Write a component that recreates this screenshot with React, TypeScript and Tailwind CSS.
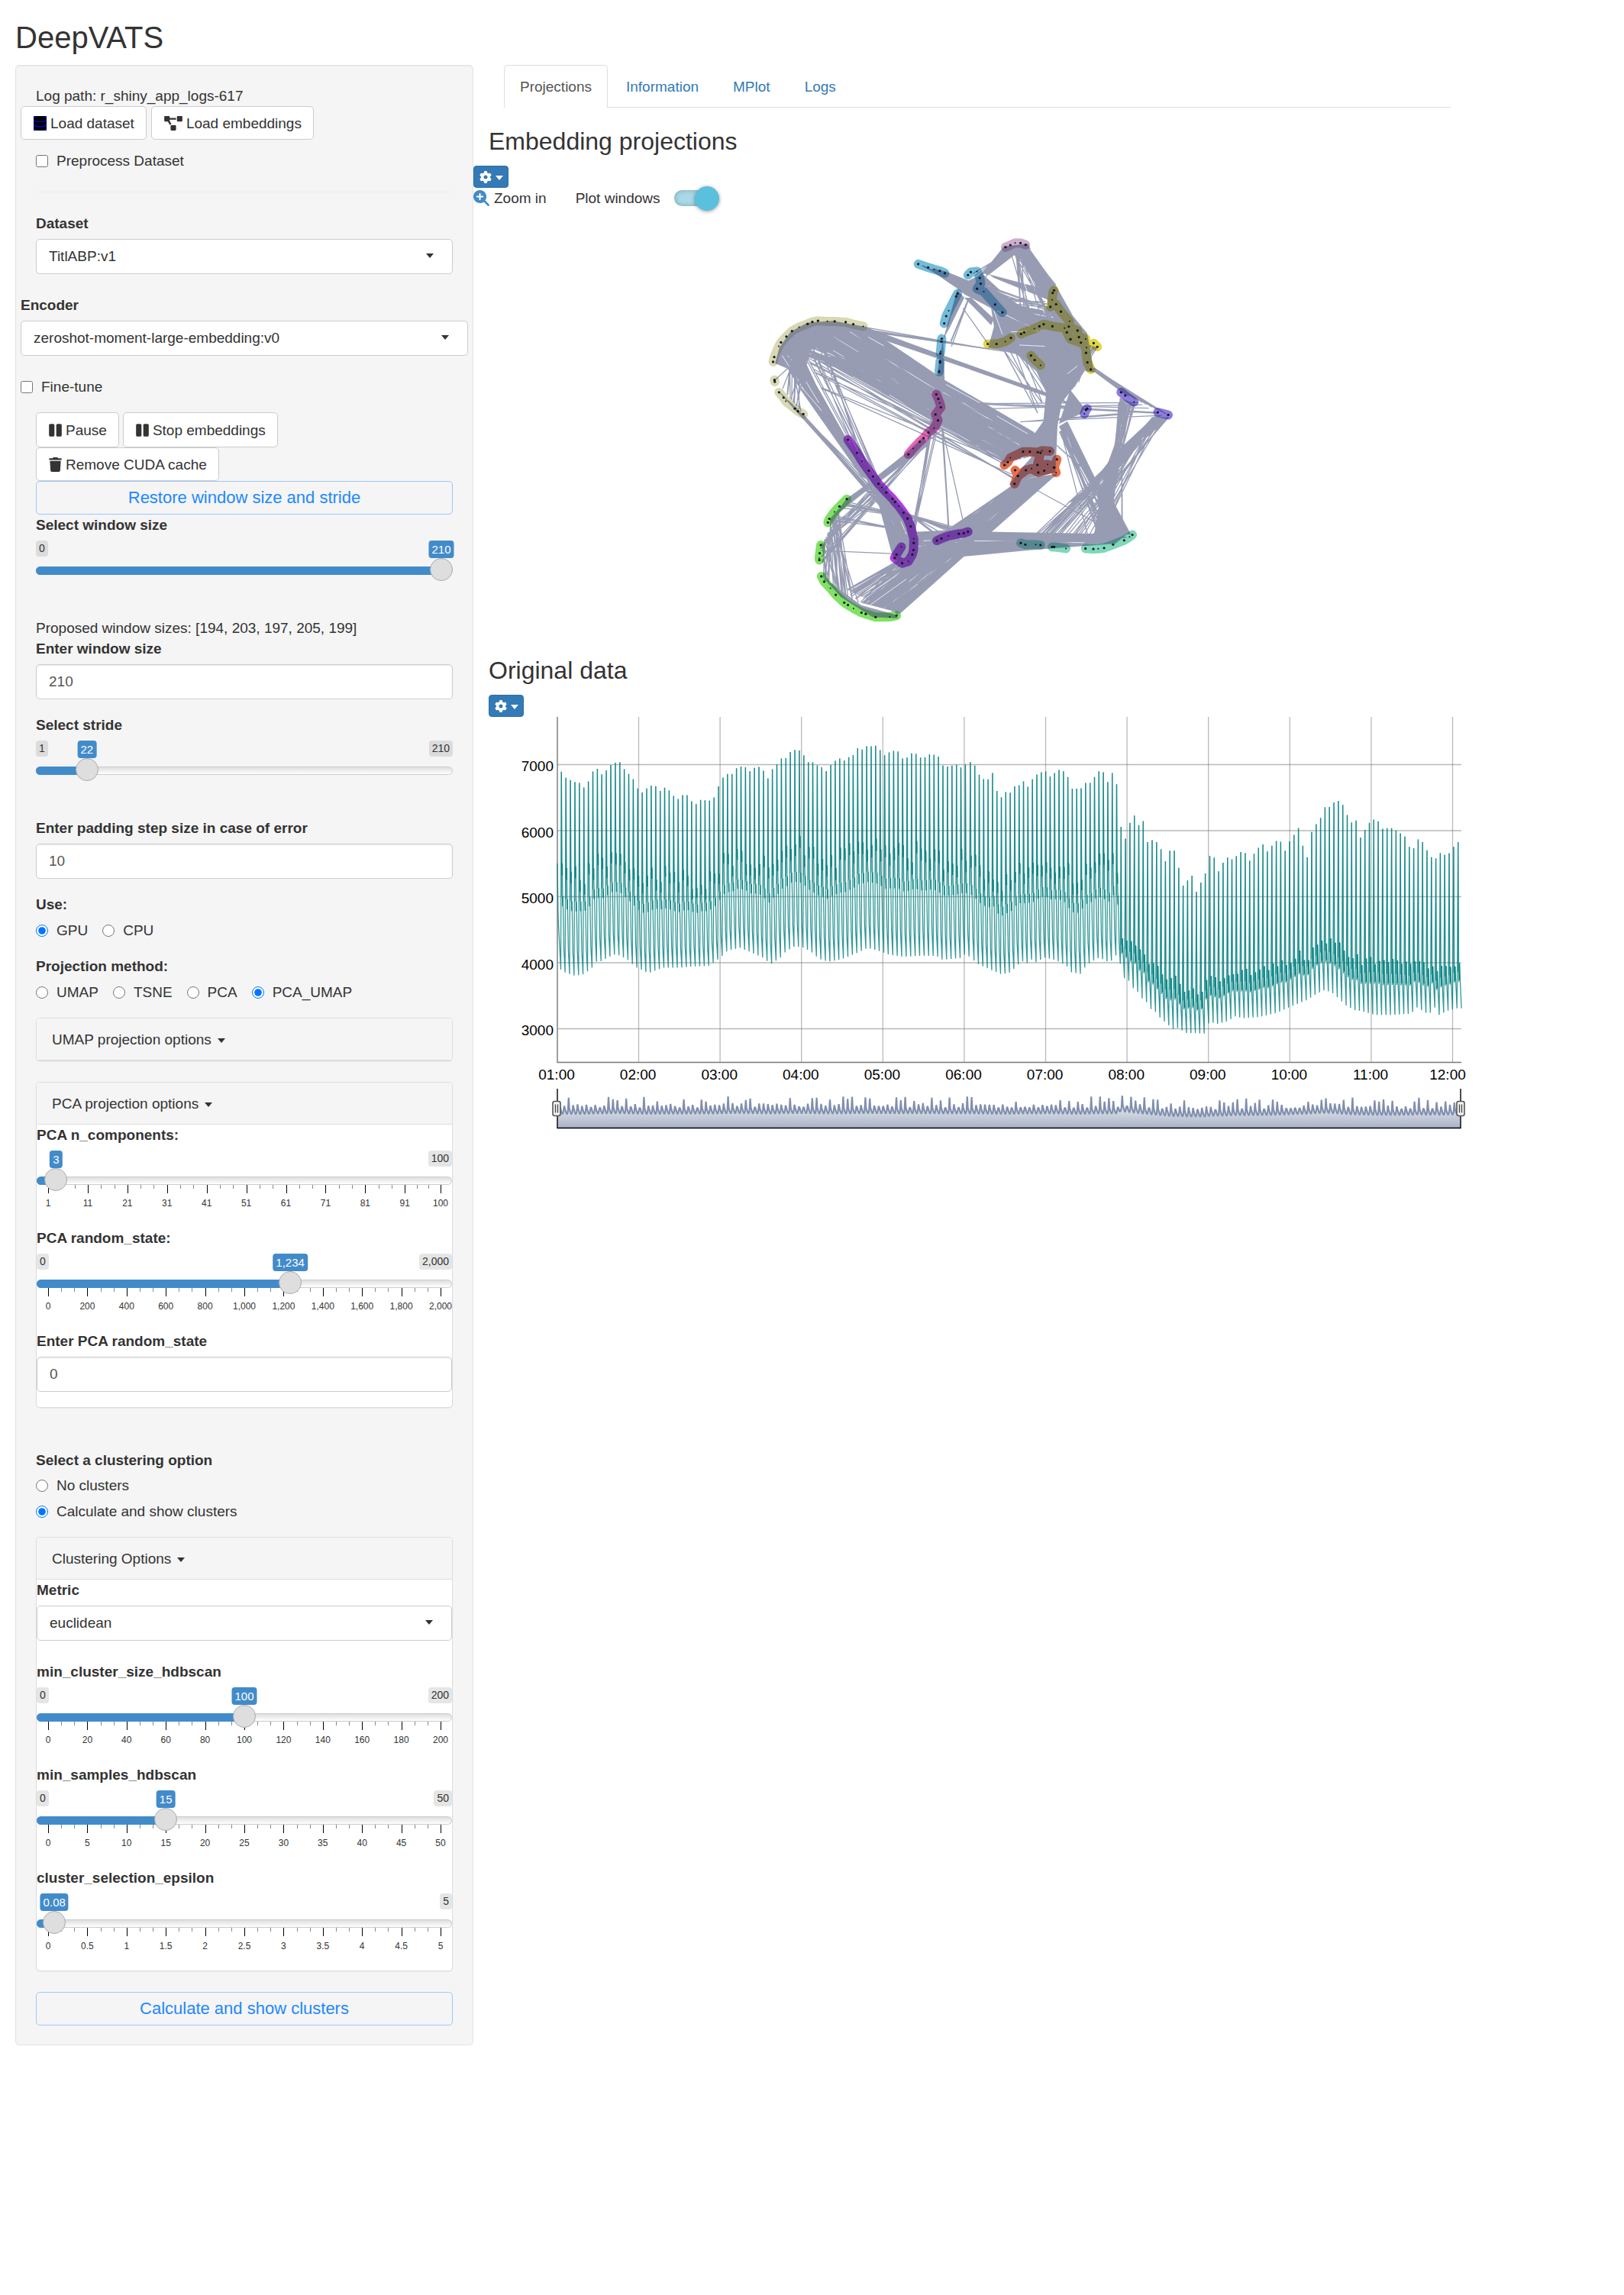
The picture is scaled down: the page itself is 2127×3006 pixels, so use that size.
import React from "react";
import { FaDatabase, FaPause, FaProjectDiagram } from "react-icons/fa";
import { FaGear, FaMagnifyingGlassPlus, FaTrash } from "react-icons/fa6";

type Point = [number, number];

/* ---------- form pieces ---------- */

function Caret({ className = "" }: { className?: string }) {
  return (
    <span
      aria-hidden="true"
      className={`inline-block border-x-[5px] border-t-[6px] border-x-transparent border-t-current ${className}`}
    />
  );
}

function SelectBox({ id, label, options }: { id: string; label: string; options: string[] }) {
  return (
    <div>
      <label htmlFor={id} className="mb-[7px] block font-bold">
        {label}
      </label>
      <div className="relative">
        <select
          id={id}
          className="block h-[46px] w-full appearance-none rounded-[5px] border border-[#ccc] bg-white px-4 pb-px text-[#333]"
        >
          {options.map((o) => (
            <option key={o}>{o}</option>
          ))}
        </select>
        <Caret className="pointer-events-none absolute top-[19px] right-[25px]" />
      </div>
    </div>
  );
}

function NumberBox({ id, label, value }: { id: string; label: string; value: string }) {
  return (
    <div>
      <label htmlFor={id} className="mb-[7px] block font-bold">
        {label}
      </label>
      <input
        id={id}
        type="text"
        inputMode="numeric"
        defaultValue={value}
        className="block h-[46px] w-full rounded-[5px] border border-[#ccc] bg-white px-4 pb-px text-[#555] shadow-[inset_0_1px_2px_rgba(0,0,0,0.08)]"
      />
    </div>
  );
}

function Choice({
  type,
  name,
  label,
  checked = false,
}: {
  type: "radio" | "checkbox";
  name: string;
  label: string;
  checked?: boolean;
}) {
  return (
    <label className="flex items-center gap-[11px]">
      <input type={type} name={name} defaultChecked={checked} className="size-4 shrink-0 accent-[#0075ff]" />
      {label}
    </label>
  );
}

interface SliderProps {
  id: string;
  label: string;
  min: number;
  max: number;
  value: number;
  ticks?: number[];
}

const fmt = (n: number) => n.toLocaleString("en-US");

function Slider({ id, label, min, max, value, ticks }: SliderProps) {
  const frac = (v: number) => ((v - min) / (max - min)) * 100;
  const minors = ticks
    ? ticks.slice(0, -1).flatMap((t, i) => {
        const step = (ticks[i + 1] - t) / 3;
        return [t + step, t + 2 * step];
      })
    : [];
  const showMin = frac(value) > 5;
  const showMax = frac(value) < 95;
  return (
    <div>
      <label htmlFor={id} className="mb-[7px] block font-bold">
        {label}
      </label>
      <div className={ticks ? "relative h-[81px]" : "relative h-[54px]"}>
        <div className="flex h-[21px] justify-between text-[14px] leading-[20px]">
          <span className={showMin ? "rounded bg-black/10 px-1" : "invisible"}>{fmt(min)}</span>
          <span className={showMax ? "rounded bg-black/10 px-1" : "invisible"}>{fmt(max)}</span>
        </div>
        <div className="absolute inset-x-0 top-[34px] h-[11px] rounded-[6px] border border-[#ccc] bg-linear-to-b from-[#dedede] to-white" />
        <div className="absolute inset-x-[15px] top-0 h-[45px]">
          <div
            className="absolute top-[34px] -left-[15px] h-[11px] rounded-l-[6px] bg-[#428bca]"
            style={{ width: `calc(${frac(value)}% + 15px)` }}
          />
          <span
            className="absolute top-0 -translate-x-1/2 rounded bg-[#428bca] px-1 text-[15px] leading-[23px] text-white"
            style={{ left: `${frac(value)}%` }}
          >
            {fmt(value)}
          </span>
          {ticks && (
            <>
              {minors.map((t) => (
                <span key={t} className="absolute top-[45px] h-[5px] w-px bg-[#888]" style={{ left: `${frac(t)}%` }} />
              ))}
              {ticks.map((t) => (
                <React.Fragment key={t}>
                  <span className="absolute top-[45px] h-[11px] w-px bg-black" style={{ left: `${frac(t)}%` }} />
                  <span
                    className="absolute top-[61px] -translate-x-1/2 text-[12px] leading-[16px]"
                    style={{ left: `${frac(t)}%` }}
                  >
                    {fmt(t)}
                  </span>
                </React.Fragment>
              ))}
            </>
          )}
        </div>
        <input
          id={id}
          type="range"
          min={min}
          max={max}
          step="any"
          defaultValue={value}
          className="absolute inset-x-0 top-[23px] h-[30px] w-full appearance-none bg-transparent [&::-webkit-slider-thumb]:size-[30px] [&::-webkit-slider-thumb]:appearance-none [&::-webkit-slider-thumb]:rounded-full [&::-webkit-slider-thumb]:border [&::-webkit-slider-thumb]:border-[#ababab] [&::-webkit-slider-thumb]:bg-[#dedede]"
        />
      </div>
    </div>
  );
}

function Panel({ title, children }: { title: string; children?: React.ReactNode }) {
  return (
    <section className="rounded-[5px] border border-[#ddd] bg-white shadow-[0_1px_1px_rgba(0,0,0,0.05)]">
      <button
        type="button"
        className="flex h-[55px] w-full items-center gap-2 rounded-t-[5px] border-b border-[#ddd] bg-[#f5f5f5] px-5 text-left"
      >
        {title}
        <Caret className="mt-1" />
      </button>
      {children && <div className="flex flex-col gap-5 pb-5">{children}</div>}
    </section>
  );
}

function PlainButton({ icon, children, className = "h-11" }: { icon: React.ReactNode; children: string; className?: string }) {
  return (
    <button
      type="button"
      className={`flex items-center gap-[5px] rounded-[5px] border border-[#ccc] bg-white pr-[15px] pl-4 whitespace-nowrap ${className}`}
    >
      {icon}
      {children}
    </button>
  );
}

function OutlineButton({ children }: { children: string }) {
  return (
    <button
      type="button"
      className="h-11 w-full rounded-[5px] border border-[#9ac8fb] pb-px text-center text-[22px] text-[#1e88ff]"
    >
      {children}
    </button>
  );
}

function GearButton({ label }: { label: string }) {
  return (
    <button
      type="button"
      aria-label={label}
      className="flex h-[29px] w-[46px] items-center justify-center gap-[5px] rounded border border-[#2e6da4] bg-[#337ab7] text-white"
    >
      <FaGear size={16} />
      <Caret className="mt-[2px]" />
    </button>
  );
}

/* ---------- embedding plot ---------- */

const KX = 580 / 1568;
const KY = 540 / 1568;
const path = (pts: Point[]) =>
  pts.map(([x, y], i) => `${i ? "L" : "M"}${(x * KX).toFixed(1)} ${(y * KY).toFixed(1)}`).join("");

function randomizer(seed: number) {
  let s = seed;
  return () => {
    s = (s * 1664525 + 1013904223) % 4294967296;
    return s / 4294967296;
  };
}

const solids: Point[][] = [
  [[220, 470], [330, 400], [415, 400], [470, 440], [690, 600], [1010, 800], [1060, 860], [920, 915], [840, 850], [640, 730], [520, 600]],
  [[220, 500], [420, 540], [640, 690], [900, 850], [905, 905], [640, 750], [400, 610]],
  [[150, 420], [210, 385], [300, 378], [410, 400], [330, 440], [220, 490], [205, 540], [240, 620], [350, 830], [430, 960], [450, 1000], [400, 970], [185, 640], [140, 560], [95, 540], [110, 480]],
  [[430, 980], [455, 980], [580, 1130], [600, 1200], [600, 1290], [520, 1290], [505, 1250], [450, 1030]],
  [[640, 180], [700, 190], [780, 225], [830, 200], [900, 270], [960, 320], [1100, 350], [1160, 400], [1200, 450], [1215, 530], [1160, 620], [1110, 690], [1095, 780], [1090, 900], [985, 850], [1045, 760], [1055, 650], [1020, 570], [950, 505], [850, 480], [870, 400], [860, 330], [770, 280]],
  [[1090, 240], [1060, 200], [990, 95], [940, 100], [1000, 210], [1060, 300]],
  [[1060, 260], [1090, 245], [1150, 360], [1200, 425], [1225, 575], [1195, 570], [1120, 400], [1060, 340]],
  [[905, 95], [990, 85], [1000, 105], [940, 130], [850, 205], [830, 195]],
  [[850, 200], [1075, 265], [1065, 300], [870, 215]],
  [[790, 290], [870, 370], [860, 395], [765, 290]],
  [[975, 930], [1000, 900], [1020, 860], [1080, 860], [1090, 890], [1088, 955], [1000, 975], [950, 1015], [925, 1000]],
  [[1000, 975], [1095, 960], [800, 1240], [540, 1490], [400, 1450], [590, 1290], [690, 1230], [800, 1130]],
  [[600, 1180], [780, 1170], [850, 1180], [1340, 1190], [1300, 1225], [1000, 1250], [760, 1275], [600, 1290]],
  [[1100, 780], [1130, 760], [1230, 980], [1290, 1060], [1355, 1190], [1260, 1195], [1235, 1040]],
  [[560, 880], [620, 820], [640, 850], [440, 1010], [350, 1060], [430, 990]],
  [[260, 1350], [400, 1460], [520, 1495], [530, 1510], [440, 1505], [330, 1430]],
  [[1140, 640], [1190, 710], [1180, 730], [1100, 770]],
  [[690, 440], [695, 600], [700, 720], [680, 790], [640, 800], [660, 640], [672, 560]],
  [[740, 260], [765, 290], [715, 400], [690, 450]],
  [[1290, 930], [1470, 750], [1440, 740], [1300, 880], [1215, 1000], [1130, 1070], [1190, 1060]],
  [[1310, 690], [1335, 690], [1300, 900], [1285, 1050], [1260, 1190], [1225, 1190], [1260, 960], [1300, 840]],
];

/* Gaps left inside the dense bands: start, end. */
const gaps: [number, number, number, number][] = [
  [300, 437, 390, 497], [360, 420, 420, 462], [425, 440, 480, 473], [245, 470, 470, 610], [300, 490, 340, 516],
  [480, 520, 560, 570], [560, 570, 660, 636], [270, 520, 360, 577], [370, 590, 470, 648], [500, 660, 560, 700],
  [520, 550, 640, 640], [690, 650, 850, 750], [720, 700, 800, 748], [760, 690, 900, 780], [850, 780, 960, 850],
  [700, 620, 820, 690], [880, 740, 990, 808], [600, 690, 640, 715], [830, 830, 900, 872], [640, 645, 700, 684],
  [940, 130, 1000, 300], [960, 120, 980, 310], [1000, 280, 1080, 370], [1010, 250, 1050, 350],
  [850, 245, 1000, 330], [870, 340, 900, 430], [880, 340, 1000, 400], [930, 420, 1040, 415], [960, 470, 1050, 475],
  [1000, 350, 1080, 365], [1130, 580, 1165, 550], [990, 600, 1030, 660], [680, 215, 740, 255],
  [140, 510, 160, 535], [170, 590, 195, 640], [180, 620, 260, 720], [120, 510, 150, 560], [205, 610, 250, 690],
  [1130, 820, 1190, 1000], [1120, 850, 1160, 950], [1240, 1000, 1210, 1160], [1240, 1080, 1180, 1180],
  [650, 1300, 570, 1370], [720, 1280, 620, 1360], [600, 1380, 480, 1470], [560, 1360, 430, 1460], [860, 1120, 770, 1200],
  [960, 1030, 850, 1140], [540, 1330, 420, 1450], [650, 1330, 570, 1400],
  [620, 1215, 760, 1205], [800, 1215, 1190, 1222], [600, 1235, 760, 1220], [490, 1100, 520, 1160], [540, 1140, 560, 1190],
];

type Bundle = [number, number, number, number, number, number, number, number, number];

const bundles: Bundle[] = [
  [110, 480, 410, 398, 900, 920, 1090, 870, 50],
  [140, 460, 250, 390, 440, 1040, 560, 1220, 14],
  [110, 650, 195, 735, 400, 960, 560, 1200, 10],
  [95, 600, 195, 735, 140, 490, 250, 470, 14],
  [205, 500, 260, 640, 900, 890, 940, 980, 10],
  [300, 400, 410, 400, 680, 455, 940, 500, 7],
  [420, 405, 480, 450, 1050, 650, 1190, 715, 30],
  [920, 100, 990, 95, 1080, 280, 1150, 390, 34],
  [925, 105, 985, 100, 960, 330, 1080, 380, 14],
  [790, 190, 830, 240, 905, 100, 960, 95, 6],
  [605, 165, 690, 190, 860, 330, 1000, 360, 16],
  [820, 230, 900, 350, 1050, 300, 1200, 540, 24],
  [760, 330, 765, 335, 845, 460, 850, 466, 1],
  [770, 300, 780, 300, 715, 430, 720, 480, 3],
  [850, 470, 980, 510, 1020, 740, 1060, 640, 8],
  [850, 460, 930, 440, 980, 420, 1060, 400, 20],
  [1170, 530, 1230, 560, 1330, 655, 1485, 735, 14],
  [1210, 470, 1235, 480, 1110, 680, 1180, 600, 10],
  [820, 690, 850, 715, 1330, 660, 1470, 740, 5],
  [930, 765, 1000, 760, 1200, 720, 1490, 740, 3],
  [1430, 745, 1490, 745, 1000, 1200, 1260, 1200, 34],
  [1450, 740, 1480, 750, 1230, 980, 1290, 960, 14],
  [1315, 670, 1370, 695, 1230, 1200, 1280, 1190, 26],
  [1100, 800, 1120, 790, 1200, 1200, 1360, 1190, 16],
  [1320, 680, 1324, 680, 1322, 1190, 1325, 1190, 2],
  [570, 1180, 600, 1270, 1130, 1220, 1350, 1200, 22],
  [940, 1000, 1100, 960, 350, 1400, 530, 1495, 40],
  [940, 1000, 1090, 960, 560, 1290, 780, 1180, 16],
  [570, 890, 690, 790, 285, 1140, 350, 1055, 24],
  [570, 890, 640, 850, 255, 1240, 262, 1300, 7],
  [440, 1000, 470, 1050, 260, 1240, 300, 1150, 10],
  [290, 1130, 320, 1100, 270, 1370, 390, 1450, 16],
  [260, 1230, 320, 1110, 265, 1350, 330, 1430, 14],
  [320, 1100, 350, 1065, 480, 1100, 780, 1180, 6],
  [290, 1140, 320, 1120, 500, 1160, 680, 1210, 5],
  [260, 1252, 260, 1252, 540, 1265, 540, 1265, 1],
  [640, 790, 670, 800, 570, 1180, 590, 1200, 8],
  [680, 780, 690, 790, 705, 1190, 770, 1180, 4],
  [560, 1110, 600, 1130, 640, 1180, 790, 1180, 12],
  [360, 1420, 400, 1450, 540, 1280, 590, 1290, 6],
  [1000, 1010, 1000, 1010, 1230, 1145, 1230, 1145, 1],
  [1090, 850, 1100, 860, 1230, 980, 1250, 1000, 3],
];

function bundleLines() {
  const rnd = randomizer(7);
  return bundles
    .map(([ax, ay, bx, by, cx, cy, dx, dy, n]) => {
      let d = "";
      for (let i = 0; i < n; i++) {
        const t = rnd();
        const u = rnd();
        d += path([
          [ax + (bx - ax) * t, ay + (by - ay) * t],
          [cx + (dx - cx) * u, cy + (dy - cy) * u],
        ]);
      }
      return d;
    })
    .join("");
}

const clusters: { color: string; strokes: Point[][] }[] = [
  { color: "#cfaecb", strokes: [[[911, 98], [928, 90], [945, 82], [964, 82], [982, 89]]] },
  {
    color: "#74bcd8",
    strokes: [
      [[602, 162], [637, 175], [658, 182], [678, 188], [696, 197]],
      [[778, 204], [788, 193], [810, 190], [820, 215], [823, 237], [810, 256], [834, 267], [874, 316], [900, 346]],
      [[741, 275], [736, 285], [710, 340], [701, 360], [694, 388]],
      [[685, 446], [684, 457], [681, 494], [680, 502]],
      [[679, 532], [679, 537], [676, 568], [676, 572]],
    ],
  },
  {
    color: "#d8d8b4",
    strokes: [
      [[88, 534], [92, 516], [108, 475], [116, 460], [135, 438], [155, 417], [180, 402], [210, 390], [227, 382], [247, 378], [280, 380], [306, 380], [345, 383], [372, 391], [407, 399]],
      [[93, 603], [94, 610]],
      [[109, 650], [125, 670], [133, 684], [165, 712], [176, 722], [195, 733]],
    ],
  },
  {
    color: "#dfd648",
    strokes: [
      [[1083, 262], [1078, 272], [1076, 298], [1070, 325], [1090, 315], [1107, 343], [1138, 380], [1135, 400], [1166, 415], [1171, 440], [1195, 447], [1196, 500], [1201, 536], [1213, 563]],
      [[848, 466], [879, 466], [910, 457], [930, 443]],
      [[966, 428], [977, 422], [1013, 408], [1031, 399], [1046, 391], [1077, 399], [1120, 406], [1128, 422], [1141, 448], [1178, 461], [1198, 480]],
      [[1223, 463], [1236, 477]],
      [[1001, 510], [1014, 527], [1035, 547]],
    ],
  },
  {
    color: "#8e7be0",
    strokes: [[[1320, 650], [1335, 662], [1366, 687]], [[1450, 726], [1487, 736]], [[1200, 712], [1196, 717], [1190, 732]]],
  },
  {
    color: "#e565b4",
    strokes: [[[666, 658], [673, 675], [678, 690], [682, 707], [663, 734], [672, 757], [658, 786], [638, 803], [621, 824], [607, 838], [584, 864], [567, 886]]],
  },
  {
    color: "#e77049",
    strokes: [
      [[907, 927], [919, 916], [928, 899], [973, 876], [997, 876], [1025, 878], [1040, 872], [1068, 874]],
      [[1035, 880], [1024, 926], [1060, 924], [1083, 936], [1048, 948], [1027, 955], [1003, 940], [983, 946], [955, 968], [943, 998]],
      [[1093, 905], [1083, 936], [1090, 955]],
      [[945, 946], [955, 968]],
    ],
  },
  {
    color: "#b23fe0",
    strokes: [
      [[353, 830], [385, 880], [403, 912], [427, 948], [442, 970], [461, 998], [473, 1012], [489, 1031], [511, 1055], [520, 1067], [533, 1083], [550, 1108], [564, 1130], [575, 1160], [586, 1207], [586, 1223], [585, 1250], [581, 1267], [567, 1293], [545, 1300], [518, 1280], [525, 1267], [542, 1238]],
      [[668, 1214], [684, 1206], [709, 1196], [746, 1188], [763, 1186], [778, 1180]],
    ],
  },
  {
    color: "#80e264",
    strokes: [
      [[349, 1056], [323, 1084], [305, 1105], [287, 1131], [282, 1145]],
      [[257, 1231], [253, 1262], [251, 1281], [252, 1288]],
      [[259, 1350], [269, 1370], [291, 1395], [310, 1420], [340, 1450], [353, 1459], [373, 1472], [401, 1488], [416, 1493], [451, 1505], [501, 1504], [525, 1499]],
    ],
  },
  {
    color: "#7fd8b8",
    strokes: [
      [[965, 1223], [981, 1229], [1018, 1229], [1035, 1231]],
      [[1076, 1238], [1083, 1238], [1125, 1244]],
      [[1194, 1244], [1222, 1246], [1239, 1245], [1260, 1242], [1292, 1229], [1331, 1213], [1350, 1200], [1360, 1192]],
    ],
  },
];

function EmbeddingPlot() {
  return (
    <svg viewBox="-3 0 580 540" role="img" aria-label="Embedding projections plot" className="h-[540px] w-[580px]">
      <defs>
        <mask id="gaps" maskUnits="userSpaceOnUse" x="-3" y="0" width="586" height="540">
          <rect x="-3" y="0" width="586" height="540" fill="#fff" />
          <g stroke="#000" strokeWidth="0.8">
            {gaps.map(([a, b, c, d], i) => (
              <line key={i} x1={a * KX} y1={b * KY} x2={c * KX} y2={d * KY} />
            ))}
          </g>
        </mask>
      </defs>
      <g fill="none" strokeWidth="12" strokeLinecap="round" strokeLinejoin="round">
        {clusters.map((c) =>
          c.strokes.map((s, i) => <path key={c.color + i} d={path(s)} stroke={c.color} />),
        )}
      </g>
      <g opacity="0.5" stroke="#313b69" fill="#313b69">
        <g mask="url(#gaps)">
          {solids.map((s, i) => (
            <path key={i} d={path(s) + "Z"} stroke="none" />
          ))}
        </g>
        <path d={bundleLines()} fill="none" strokeWidth="1.3" />
      </g>
      <g fill="#15151f">
        {clusters.flatMap((c) =>
          c.strokes.flatMap((s, j) =>
            s.map(([x, y], i) => <circle key={`${c.color}-${j}-${i}`} cx={x * KX} cy={y * KY} r={i % 4 === 2 ? 1 : 1.6} />),
          ),
        )}
      </g>
    </svg>
  );
}

/* ---------- time series plot ---------- */

const peaksEarly = [
  382, 401, 408, 414, 417, 431, 412, 381, 373, 390, 378, 361, 354, 352, 374, 389, 405, 434, 447, 434, 425, 427, 442, 432, 440,
  457, 467, 455, 455, 474, 482, 470, 471, 472, 462, 428, 400, 389, 389, 371, 366, 368, 380, 370, 367, 379, 403, 374, 359, 341,
  340, 321, 314, 316, 331, 352, 353, 362, 368, 380, 361, 348, 341, 347, 337, 330, 309, 313, 303, 303, 301, 315, 331, 322, 317,
  319, 341, 338, 325, 326, 338, 337, 328, 329, 335, 363, 366, 363, 360, 369, 360,
];
const peaksLate = [
  208, 220, 252, 267, 268, 246, 308, 330, 312, 314, 292, 288, 275, 294, 268, 251, 243, 240, 258, 246, 235, 240, 260, 300, 300,
  299, 280, 280, 260, 240, 243, 277, 246, 285, 433, 474, 419, 394, 427, 413, 486, 479, 486, 511, 553, 516, 516, 576, 638, 620,
  603, 659, 627, 595, 534, 540, 588, 558, 540, 546, 535, 521, 524, 551, 527, 506, 494, 519, 499, 482, 485, 516, 484, 461, 437,
  499, 539, 451, 424, 402, 365, 364, 349, 343, 357, 392, 418, 411, 470, 444, 419, 408, 414, 440, 438, 438, 446, 456, 467, 503,
  508, 477, 486, 515, 539, 543, 524, 531, 525, 503, 486,
];
const lowEarly: Point[] = [
  [272, 1002], [316, 1017], [345, 1012], [372, 990], [386, 970], [400, 972], [415, 962], [443, 950], [458, 955], [486, 970],
  [502, 988], [545, 1009], [590, 992], [640, 992], [690, 988], [735, 986], [763, 965], [777, 953], [790, 940], [830, 930],
  [860, 942], [900, 960], [927, 980], [955, 962], [968, 946], [995, 927], [1022, 927], [1050, 941], [1077, 965], [1105, 973],
  [1145, 966], [1185, 950], [1228, 930], [1270, 942], [1295, 952], [1340, 958], [1390, 955], [1440, 955], [1460, 967],
  [1515, 962], [1531, 950],
];
const lowLate: Point[] = [
  [0, 885], [28, 912], [70, 933], [99, 947], [125, 940], [150, 912], [165, 900], [178, 908], [190, 895], [203, 905], [230, 888],
  [270, 900], [298, 917], [313, 940], [341, 945], [355, 920], [370, 905], [398, 888], [428, 905], [442, 893], [457, 865],
  [469, 968], [484, 950], [497, 995], [511, 995], [525, 1028], [540, 1035], [553, 1066], [566, 1070], [580, 1092], [604, 1117],
  [631, 1142], [644, 1128], [657, 1150], [726, 1153], [738, 1100], [752, 1122], [792, 1110], [820, 1090], [834, 1100],
  [890, 1095], [945, 1080], [983, 1060], [1010, 1048], [1037, 1035], [1060, 1018], [1086, 1002], [1110, 1008], [1137, 1035],
  [1151, 1052], [1178, 1070], [1204, 1075], [1243, 1088], [1300, 1088], [1356, 1083], [1370, 1060], [1398, 1080], [1412, 1083],
  [1426, 1060], [1440, 1088], [1468, 1073], [1496, 1065],
];

const early = ([x, y]: Point): Point => [620 + x / 2.3758, 850 + y / 2.3758];
const late = ([x, y]: Point): Point => [1270 + x / 2.3403, 920 + y / 2.6576];
const spread = (ys: number[], from: number, to: number): Point[] =>
  ys.map((y, i) => [from + ((to - from) * i) / (ys.length - 1), y]);

const peaks: Point[] = [
  ...spread(peaksEarly, 274, 1531).map(early),
  ...spread(peaksLate, 2, 1497).map(late),
];
const lows: Point[] = [...lowEarly.map(early), ...lowLate.map(late)];

function lowAt(x: number) {
  const i = lows.findIndex((p) => p[0] >= x);
  if (i <= 0) return i === 0 ? lows[0][1] : lows[lows.length - 1][1];
  const [x0, y0] = lows[i - 1];
  const [x1, y1] = lows[i];
  return y0 + ((y1 - y0) * (x - x0)) / (x1 - x0 || 1);
}

function seriesPaths() {
  const rnd = randomizer(11);
  let line = "M730 1131L731 1200L734.5 1270";
  let stems = "";
  let marks = "";
  peaks.forEach(([x, top]) => {
    const low = lowAt(x + 5);
    const at = (f: number) => (top + (low - top) * f).toFixed(1);
    const p = (dx: number, f: number) => `L${(x + dx).toFixed(1)} ${at(f)}`;
    if (x < 1467) {
      const f = 0.43 + rnd() * 0.11;
      line += p(0, 0) + p(0.8, f) + p(1.2, f + 0.05) + p(1.7, 0.64) + p(2.3, 0.68) + p(3.2, 0.88) + p(4.8, 1);
      stems += `M${x.toFixed(1)} ${at(0)}V${at(0.62)}`;
      marks += `M${(x + 1).toFixed(1)} ${at(f)}V${at(f + 0.06)}M${(x + 1.8).toFixed(1)} ${at(0.62)}V${at(0.67)}`;
    } else {
      const f = 0.7 + rnd() * 0.04;
      line += p(0, 0) + p(0.9, 0.84) + p(1.6, f) + p(2.4, 0.8) + p(3.2, 0.88) + p(4.4, 1);
      stems += `M${x.toFixed(1)} ${at(0)}V${at(0.78)}`;
      marks += `M${(x + 1.8).toFixed(1)} ${at(f)}V${at(0.83)}`;
    }
  });
  return { line, stems, marks };
}

function rangePath() {
  const rnd = randomizer(23);
  let d = "";
  for (let x = 731; x < 1908; x += 5.8) {
    const base = x < 1465 ? 1459 - (lowAt(1000) - lowAt(x)) * 0.03 : 1450 + (lowAt(x) - 1200) * 0.085;
    const tall = rnd() > 0.6;
    const top = base - (tall ? 16 + rnd() * 7 : 8 + rnd() * 6);
    d += `L${x.toFixed(1)} ${base.toFixed(1)}L${(x + 1.2).toFixed(1)} ${(base - 4).toFixed(1)}L${(x + 2.2).toFixed(1)} ${top.toFixed(1)}L${(x + 3).toFixed(1)} ${(base - 8).toFixed(1)}L${(x + 4.4).toFixed(1)} ${(base - 3).toFixed(1)}`;
  }
  return "M730 1450" + d + "L1913 1458";
}

const yTicks = [7000, 6000, 5000, 4000, 3000];
const hours = ["01:00", "02:00", "03:00", "04:00", "05:00", "06:00", "07:00", "08:00", "09:00", "10:00", "11:00", "12:00"];

function RangeHandle({ x }: { x: number }) {
  return (
    <g>
      <rect x={x - 5} y="1442.5" width="10" height="19" rx="2.5" fill="#f2f2f2" stroke="#555" strokeWidth="1.6" />
      <path d={`M${x - 1.5} 1446.5V1457.5M${x + 1.5} 1446.5V1457.5`} stroke="#444" strokeWidth="1.3" />
    </g>
  );
}

function SeriesPlot() {
  const { line, stems, marks } = seriesPaths();
  const range = rangePath();
  return (
    <svg
      viewBox="620 939 1294 546"
      role="img"
      aria-label="Original data plot"
      className="block w-full overflow-visible font-['Liberation_Sans',Arial,sans-serif] text-[19px]"
    >
      <defs>
        <linearGradient id="rangeFill" x1="0" y1="0" x2="0" y2="1">
          <stop offset="0" stopColor="#fff" />
          <stop offset="1" stopColor="#a7b1c6" />
        </linearGradient>
      </defs>
      <g stroke="#808080" strokeOpacity="0.55" strokeWidth="1.3">
        {yTicks.map((t, i) => (
          <line key={t} x1="730" x2="1914" y1={1001.5 + i * 86.5} y2={1001.5 + i * 86.5} />
        ))}
        {hours.slice(1).map((h, i) => (
          <line key={h} x1={836.5 + i * 106.6} x2={836.5 + i * 106.6} y1="939" y2="1391" />
        ))}
      </g>
      <path d="M730 939V1391.5H1914" fill="none" stroke="#777" strokeWidth="1.4" />
      <g fill="none" stroke="#008080">
        <path d={line} strokeWidth="1.3" strokeOpacity="0.8" strokeLinejoin="bevel" />
        <path d={stems} strokeWidth="1.4" strokeOpacity="0.6" />
        <path d={marks} strokeWidth="1.9" strokeOpacity="0.8" />
      </g>
      <g fill="#000">
        {yTicks.map((t, i) => (
          <text key={t} x="725" y={1010 + i * 86.5} textAnchor="end">
            {t}
          </text>
        ))}
        {hours.map((h, i) => (
          <text key={h} x={i === 11 ? 1896 : 729 + i * 106.6} y="1414" textAnchor="middle">
            {h}
          </text>
        ))}
      </g>
      <path d={range + "V1478H730Z"} fill="url(#rangeFill)" />
      <path d={range} fill="none" stroke="#808fae" strokeWidth="2.2" strokeLinejoin="bevel" />
      <path d="M730 1426V1477.5H1913V1426" fill="none" stroke="#000" strokeWidth="1.4" />
      <RangeHandle x={729} />
      <RangeHandle x={1913} />
    </svg>
  );
}

/* ---------- page ---------- */

const series = (from: number, step: number, count: number) => Array.from({ length: count }, (_, i) => from + i * step);

function Sidebar() {
  return (
    <form className="w-[600px] shrink-0 rounded-[5px] border border-[#e3e3e3] bg-[#f5f5f5] px-[26px] pt-[26px] pb-[25px] shadow-[inset_0_1px_1px_rgba(0,0,0,0.05)]">
      <p>Log path: r_shiny_app_logs-617</p>
      <div className="-mx-5 flex gap-[6px]">
        <PlainButton icon={<FaDatabase size={19} className="w-[17px] bg-[#0000ff] text-black" />}>Load dataset</PlainButton>
        <PlainButton icon={<FaProjectDiagram size={19} className="w-6" />}>Load embeddings</PlainButton>
      </div>
      <div className="mt-[14px]">
        <Choice type="checkbox" name="preprocess" label="Preprocess Dataset" />
      </div>
      <hr className="my-[27px] border-[#eee]" />
      <SelectBox id="dataset" label="Dataset" options={["TitlABP:v1"]} />
      <div className="-mx-5 mt-[27px] flex flex-col gap-[27px]">
        <SelectBox id="encoder" label="Encoder" options={["zeroshot-moment-large-embedding:v0"]} />
        <Choice type="checkbox" name="fine-tune" label="Fine-tune" />
      </div>
      <div className="mt-5 flex flex-wrap gap-x-[5px]">
        <PlainButton className="h-[46px]" icon={<FaPause size={19} className="w-[17px]" />}>
          Pause
        </PlainButton>
        <PlainButton className="h-[46px]" icon={<FaPause size={19} className="w-[17px]" />}>
          Stop embeddings
        </PlainButton>
      </div>
      <div className="flex">
        <PlainButton icon={<FaTrash size={19} className="w-[17px]" />}>Remove CUDA cache</PlainButton>
      </div>
      <OutlineButton>Restore window size and stride</OutlineButton>
      <Slider id="window-size" label="Select window size" min={0} max={210} value={210} />
      <p className="mt-[47px]">Proposed window sizes: [194, 203, 197, 205, 199]</p>
      <NumberBox id="window-size-text" label="Enter window size" value="210" />
      <div className="mt-5">
        <Slider id="stride" label="Select stride" min={1} max={210} value={22} />
      </div>
      <div className="mt-[47px] flex flex-col gap-5">
        <NumberBox id="padding" label="Enter padding step size in case of error" value="10" />
        <fieldset>
          <legend className="mb-[7px] font-bold">Use:</legend>
          <div className="flex gap-[19px]">
            <Choice type="radio" name="device" label="GPU" checked />
            <Choice type="radio" name="device" label="CPU" />
          </div>
        </fieldset>
        <fieldset>
          <legend className="mb-[7px] font-bold">Projection method:</legend>
          <div className="flex gap-[19px]">
            <Choice type="radio" name="method" label="UMAP" />
            <Choice type="radio" name="method" label="TSNE" />
            <Choice type="radio" name="method" label="PCA" />
            <Choice type="radio" name="method" label="PCA_UMAP" checked />
          </div>
        </fieldset>
      </div>
      <div className="mt-5 flex flex-col gap-[27px]">
        <Panel title="UMAP projection options" />
        <Panel title="PCA projection options">
          <Slider
            id="pca-components"
            label="PCA n_components:"
            min={1}
            max={100}
            value={3}
            ticks={[...series(1, 10, 10), 100]}
          />
          <Slider id="pca-state" label="PCA random_state:" min={0} max={2000} value={1234} ticks={series(0, 200, 11)} />
          <NumberBox id="pca-state-text" label="Enter PCA random_state" value="0" />
        </Panel>
      </div>
      <fieldset className="mt-[55px] mb-5">
        <legend className="mb-[6px] font-bold">Select a clustering option</legend>
        <div className="flex flex-col gap-[7px]">
          <Choice type="radio" name="clustering" label="No clusters" />
          <Choice type="radio" name="clustering" label="Calculate and show clusters" checked />
        </div>
      </fieldset>
      <Panel title="Clustering Options">
        <div className="mb-[7px]">
          <SelectBox id="metric" label="Metric" options={["euclidean"]} />
        </div>
        <Slider id="min-cluster" label="min_cluster_size_hdbscan" min={0} max={200} value={100} ticks={series(0, 20, 11)} />
        <Slider id="min-samples" label="min_samples_hdbscan" min={0} max={50} value={15} ticks={series(0, 5, 11)} />
        <Slider id="epsilon" label="cluster_selection_epsilon" min={0} max={5} value={0.08} ticks={series(0, 0.5, 11)} />
      </Panel>
      <div className="mt-[27px]">
        <OutlineButton>Calculate and show clusters</OutlineButton>
      </div>
    </form>
  );
}

function Tabs() {
  return (
    <nav className="mr-[14px] ml-10 flex h-14 gap-[3px] border-b border-[#ddd]">
      <a
        href="#projections"
        aria-current="page"
        className="-mb-px flex items-center rounded-t-[5px] border border-b-0 border-[#ddd] bg-white px-5 text-[#555]"
      >
        Projections
      </a>
      {["Information", "MPlot", "Logs"].map((t) => (
        <a key={t} href={`#${t.toLowerCase()}`} className="flex items-center px-[21px] pt-px text-[#337ab7]">
          {t}
        </a>
      ))}
    </nav>
  );
}

export default function App() {
  return (
    <div className="min-h-screen bg-white px-5 pt-[27px] pb-10 font-['Liberation_Sans',Arial,sans-serif] text-[19px] leading-[27px] text-[#333]">
      <h1 className="mb-[14px] text-[40px] leading-[44px]">DeepVATS</h1>
      <div className="flex items-start">
        <Sidebar />
        <main className="max-w-[1294px] min-w-0 flex-1">
          <Tabs />
          <h2 className="mt-[26px] ml-5 text-[32px] leading-9">Embedding projections</h2>
          <div className="mt-[14px]">
            <GearButton label="Embedding plot settings" />
          </div>
          <div className="flex h-[27px] items-center">
            <button type="button" className="flex items-center gap-[6px]">
              <FaMagnifyingGlassPlus size={21} className="text-[#428bca]" />
              Zoom in
            </button>
            <label className="ml-[38px] flex items-center gap-[18px]">
              Plot windows
              <span className="relative flex h-[21px] w-[54px] items-center">
                <input
                  type="checkbox"
                  role="switch"
                  defaultChecked
                  className="h-[21px] w-[54px] appearance-none rounded-full bg-[#a9d9e6] shadow-[inset_0_0_6px_rgba(0,0,0,0.25)]"
                />
                <span className="pointer-events-none absolute left-[27px] size-8 rounded-full bg-[#5bc0de] shadow-[0_1px_5px_rgba(0,0,0,0.4)]" />
              </span>
            </label>
          </div>
          <div className="mt-[17px] flex justify-center">
            <EmbeddingPlot />
          </div>
          <h2 className="mt-[30px] ml-5 text-[32px] leading-9">Original data</h2>
          <div className="mt-[14px] ml-5">
            <GearButton label="Original data settings" />
          </div>
          <SeriesPlot />
        </main>
      </div>
    </div>
  );
}
